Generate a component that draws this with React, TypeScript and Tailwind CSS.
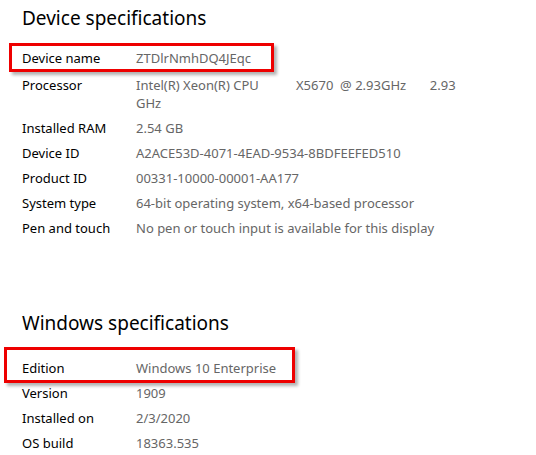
const deviceRows: [string, string][] = [
  ['Processor', 'Intel(R) Xeon(R) CPU           X5670  @ 2.93GHz       2.93 GHz'],
  ['Installed RAM', '2.54 GB'],
  ['Device ID', 'A2ACE53D-4071-4EAD-9534-8BDFEEFED510'],
  ['Product ID', '00331-10000-00001-AA177'],
  ['System type', '64-bit operating system, x64-based processor'],
  ['Pen and touch', 'No pen or touch input is available for this display'],
]

const windowsRows: [string, string][] = [
  ['Version', '1909'],
  ['Installed on', '2/3/2020'],
  ['OS build', '18363.535'],
]

function Row({ label, value, className = 'py-[3.5px]' }: { label: string; value: string; className?: string }) {
  return (
    <div className={`flex leading-[18px] ${className}`}>
      <div className="w-[114px] shrink-0 text-black">{label}</div>
      <div className="w-[320px] whitespace-pre-wrap text-[#666666]">{value}</div>
    </div>
  )
}

export default function App() {
  return (
    <div
      className="h-[455px] w-[536px] overflow-hidden bg-white text-[13px]"
      style={{ fontFamily: '"Noto Sans", "Open Sans", sans-serif' }}
    >
      <h2 className="pl-[22px] pt-[4px] text-[19px] leading-[28px] text-black">Device specifications</h2>

      <div className="ml-[9px] mt-[11px] w-[265px] border-[3px] border-[#ee0000] pl-[10px] shadow-[3px_3px_3px_rgba(0,0,0,0.3)]">
        <Row label="Device name" value="ZTDlrNmhDQ4JEqc" className="pt-[3px] pb-[2px]" />
      </div>
      <div className="pl-[22px]">
        {deviceRows.map(([l, v]) => (
          <Row key={l} label={l} value={v} />
        ))}
      </div>

      <h2 className="mt-[69px] pl-[22px] text-[19px] leading-[28px] text-black">Windows specifications</h2>

      <div className="ml-[4px] mt-[9.5px] w-[291px] border-[3px] border-[#ee0000] pl-[15px] shadow-[3px_3px_3px_rgba(0,0,0,0.3)]">
        <Row label="Edition" value="Windows 10 Enterprise" className="pt-[9px] pb-[3px]" />
      </div>
      <div className="-mt-[2.5px] pl-[22px]">
        {windowsRows.map(([l, v]) => (
          <Row key={l} label={l} value={v} />
        ))}
      </div>
    </div>
  )
}
